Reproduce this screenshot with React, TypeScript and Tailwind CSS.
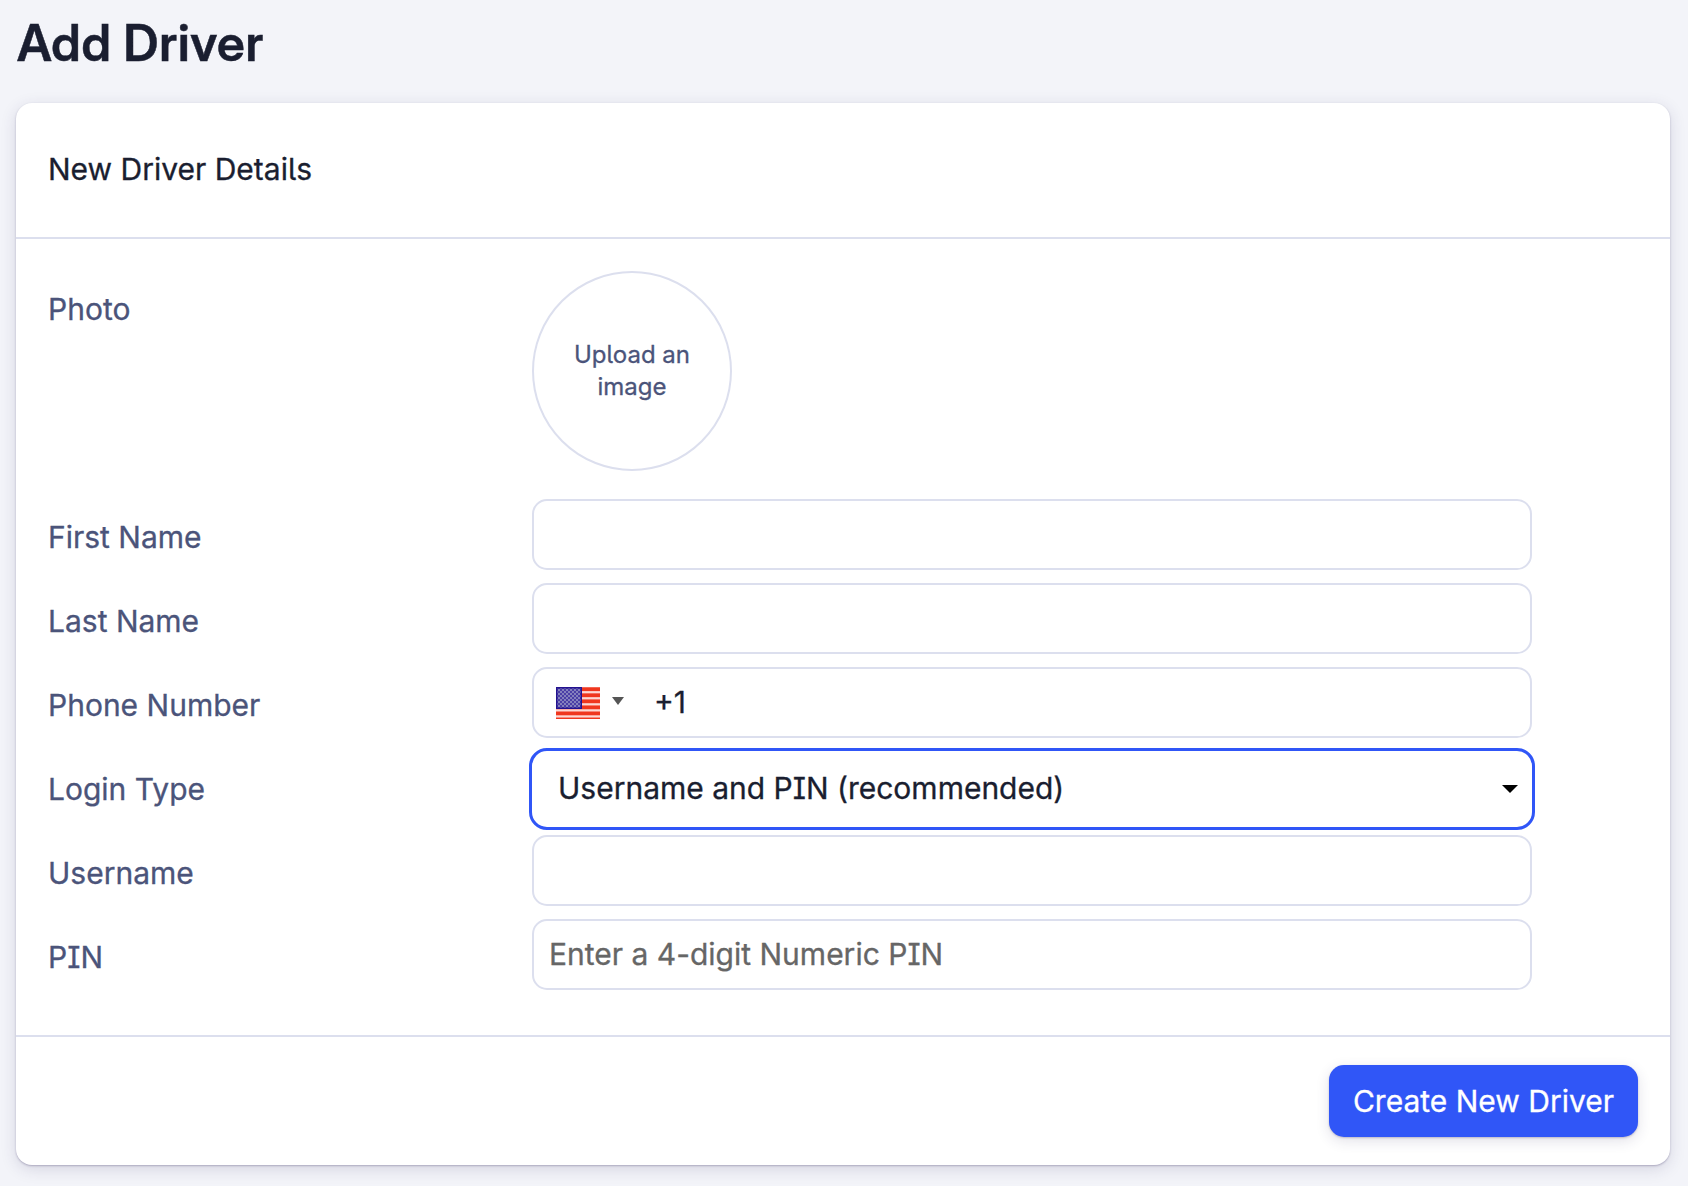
import React from 'react';

const label = 'w-[484px] shrink-0 pt-4 text-[30px] leading-[44px] text-[#4b547a]';
const input =
  'h-[71px] w-[1000px] rounded-[15px] border-2 border-[#dcdfee] bg-white px-[15px] pb-[2px] text-[30px] text-[#1a1e30] outline-none placeholder:text-[#666666]';

function Row({ name, children }: { name: string; children: React.ReactNode }) {
  return (
    <div className="flex h-[84px] items-start">
      <label className={label}>{name}</label>
      {children}
    </div>
  );
}

function Flag() {
  return (
    <svg width="44" height="32" viewBox="0 0 44 32">
      <defs>
        <pattern id="stars" width="4" height="4" patternUnits="userSpaceOnUse">
          <rect width="4" height="4" fill="#4a3fa6" />
          <rect width="2" height="2" fill="#8480bd" />
          <rect x="2" y="2" width="2" height="2" fill="#8480bd" />
        </pattern>
      </defs>
      <rect width="44" height="32" fill="#fdd8d3" />
      {[0, 1, 2, 3, 4, 5].map((i) => (
        <rect key={i} y={0.3 + i * 6.05} width="44" height="3.8" fill="#f0371e" />
      ))}
      <rect width="26" height="22" fill="#23128f" />
      <rect x="1.5" y="1.5" width="23" height="19" fill="url(#stars)" />
    </svg>
  );
}

export default function App() {
  return (
    <div className="h-[1186px] w-[1688px] overflow-hidden bg-[#f3f4f9] pl-4 pr-[18px] font-['Inter',sans-serif] text-[#1a1e30] [-webkit-text-stroke-width:0.3px] [font-feature-settings:'ss02']">
      <h1 className="h-[103px] pl-px pt-[13px] font-['Inter_Display','Inter',sans-serif] text-[50px] font-semibold leading-[60px] tracking-[0.75px] [-webkit-text-stroke-width:0.5px]">
        Add Driver
      </h1>
      <div className="h-[1062px] rounded-[16px] bg-white shadow-[0_1px_2px_rgba(50,40,93,0.3),0_4px_16px_rgba(50,40,93,0.15)]">
        <div className="h-[136px] border-b-2 border-[#dcdfee] pl-8 pt-[44px] text-[30px] leading-[44px]">
          New Driver Details
        </div>
        <div className="h-[798px] border-b-2 border-[#dcdfee] pl-8 pt-8">
          <div className="flex h-[228px] items-start">
            <div className={label}>Photo</div>
            <div className="flex size-[200px] items-center justify-center rounded-full border-2 border-[#dcdfee] px-8 text-center text-[24px] leading-8 text-[#4b547a]">
              Upload an image
            </div>
          </div>
          <Row name="First Name"><input className={input} /></Row>
          <Row name="Last Name"><input className={input} /></Row>
          <Row name="Phone Number">
            <div className="flex h-[71px] w-[1000px] items-center rounded-[15px] border-2 border-[#dcdfee] pl-[22px]">
              <Flag />
              <svg className="-mt-[3px] ml-3" width="12" height="8" viewBox="0 0 12 8"><path d="M0 0h12L6 8z" fill="#555" /></svg>
              <span className="ml-[30px] text-[30px]">+1</span>
            </div>
          </Row>
          <Row name="Login Type">
            <div className="-ml-[3px] -mt-[3px] flex h-[82px] w-[1006px] items-center rounded-[18px] border-[3px] border-[#3056f7] pl-[26px] pr-[14px]">
              <span className="flex-1 pb-[2px] text-[30px]">Username and PIN (recommended)</span>
              <svg width="16" height="8" viewBox="0 0 16 8"><path d="M0 0h16L8 8z" fill="#000" /></svg>
            </div>
          </Row>
          <Row name="Username"><input className={input} /></Row>
          <Row name="PIN"><input className={input} placeholder="Enter a 4-digit Numeric PIN" /></Row>
        </div>
        <div className="flex justify-end pr-8 pt-7">
          <button className="h-[72px] w-[309px] rounded-[15px] bg-[#3056f7] text-[30px] text-white shadow-[0_1px_2px_rgba(50,40,93,0.25),0_4px_14px_rgba(50,40,93,0.14)]">
            Create New Driver
          </button>
        </div>
      </div>
    </div>
  );
}
